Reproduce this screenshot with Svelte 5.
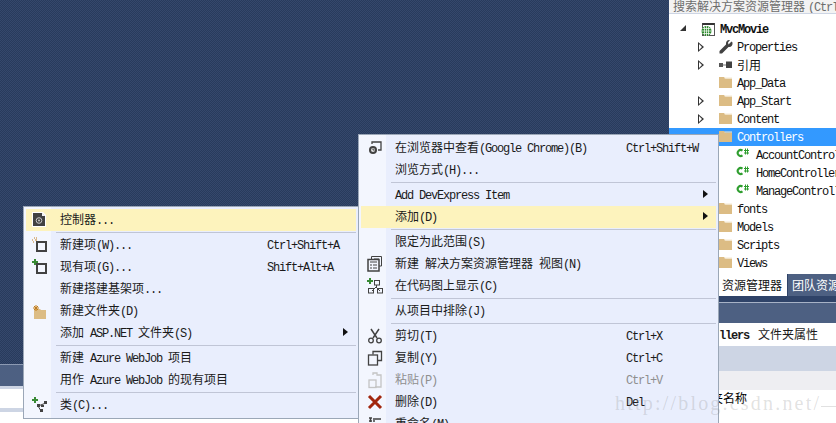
<script lang="ts">
  type Row = {
    label?: string;
    key?: string;
    icon?: string;
    sub?: boolean;
    hot?: boolean;
    off?: boolean;
    sep?: boolean;
  };

  const addMenu: Row[] = [
    { label: '控制器...', icon: 'doc', hot: true },
    { sep: true },
    { label: '新建项(W)...', key: 'Ctrl+Shift+A', icon: 'newitem' },
    { label: '现有项(G)...', key: 'Shift+Alt+A', icon: 'existing' },
    { label: '新建搭建基架项...' },
    { label: '新建文件夹(D)', icon: 'newfolder' },
    { label: '添加 ASP.NET 文件夹(S)', sub: true },
    { sep: true },
    { label: '新建 Azure WebJob 项目' },
    { label: '用作 Azure WebJob 的现有项目' },
    { sep: true },
    { label: '类(C)...', icon: 'cls' }
  ];

  const contextMenu: Row[] = [
    { label: '在浏览器中查看(Google Chrome)(B)', key: 'Ctrl+Shift+W', icon: 'browse' },
    { label: '浏览方式(H)...' },
    { sep: true },
    { label: 'Add DevExpress Item', sub: true },
    { label: '添加(D)', sub: true, hot: true },
    { sep: true },
    { label: '限定为此范围(S)' },
    { label: '新建 解决方案资源管理器 视图(N)', icon: 'view' },
    { label: '在代码图上显示(C)', icon: 'map' },
    { sep: true },
    { label: '从项目中排除(J)' },
    { sep: true },
    { label: '剪切(T)', key: 'Ctrl+X', icon: 'cut' },
    { label: '复制(Y)', key: 'Ctrl+C', icon: 'copy' },
    { label: '粘贴(P)', key: 'Ctrl+V', icon: 'paste', off: true },
    { label: '删除(D)', key: 'Del', icon: 'del' },
    { label: '重命名(M)', icon: 'rename' }
  ];

  const tree = [
    { label: 'MvcMovie', level: 'root', icon: 'web', arrow: 'open' },
    { label: 'Properties', level: 'one', icon: 'wrench', arrow: 'closed' },
    { label: '引用', level: 'one', icon: 'ref', arrow: 'closed' },
    { label: 'App_Data', level: 'one', icon: 'folder' },
    { label: 'App_Start', level: 'one', icon: 'folder', arrow: 'closed' },
    { label: 'Content', level: 'one', icon: 'folder', arrow: 'closed' },
    { label: 'Controllers', level: 'one', icon: 'folder', selected: true },
    { label: 'AccountControl', level: 'two', icon: 'cs' },
    { label: 'HomeController', level: 'two', icon: 'cs' },
    { label: 'ManageControll', level: 'two', icon: 'cs' },
    { label: 'fonts', level: 'one', icon: 'folder' },
    { label: 'Models', level: 'one', icon: 'folder' },
    { label: 'Scripts', level: 'one', icon: 'folder' },
    { label: 'Views', level: 'one', icon: 'folder' }
  ];

  function parts(text: string) {
    return (text.match(/[\u4e00-\u9fff]+|[^\u4e00-\u9fff]+/g) ?? []).map((t) => ({
      t,
      cjk: /[\u4e00-\u9fff]/.test(t)
    }));
  }
</script>

{#snippet text(value: string)}
  {#each parts(value) as part}<span class={part.cjk ? 'cjk' : 'lat'}>{part.t}</span>{/each}
{/snippet}

{#snippet folder()}
  <svg class="ico" viewBox="0 0 16 16">
    <path d="M1 2h5l1.500 1.500H14V13H1Z" fill="#dcbc84" />
    <path d="M6.500 3h7.500" stroke="#f4e8d0" fill="none" />
  </svg>
{/snippet}

{#snippet glyph(name: string)}
  <svg class="ico" viewBox="0 0 16 16">
    {#if name === 'doc'}
      <path d="M0 0h11l3 3v12H0Z" fill="#fff" />
      <path d="M1 1h9l3 3v10H1Z" fill="#424242" />
      <path d="M10 .500 13.500 4H10Z" fill="#f4f4f4" />
      <circle cx="7" cy="8.500" r="2.800" fill="none" stroke="#c8c8c8" />
      <circle cx="7" cy="8.500" r="1" fill="#c8c8c8" />
    {:else if name === 'newitem'}
      <rect x="5" y="5" width="9" height="9" fill="#f3f6fe" stroke="#424242" stroke-width="2" />
      <path d="M2 1h1M4 1h1M0 3h1M3 3h2M1 5h1" stroke="#c27d1a" fill="none" />
    {:else if name === 'existing'}
      <rect x="5" y="5" width="9" height="9" fill="#f3f6fe" stroke="#424242" stroke-width="2" />
      <path d="M3 0v6M0 3h6" stroke="#388a34" stroke-width="2" fill="none" />
    {:else if name === 'newfolder'}
      <path d="M2 6h6l1 1h5v9H2Z" fill="#dcbc84" />
      <path d="M4 2v6M1 5h6M2 3l4 4M6 3l-4 4" stroke="#c27d1a" fill="none" />
    {:else if name === 'cls'}
      <path d="M3 0v6M0 3h6" stroke="#388a34" stroke-width="2" fill="none" />
      <path d="M6 9l8-3M6 9l3 5" stroke="#424242" fill="none" />
      <path d="M5 7h3v3H5ZM12 4h3v3h-3ZM8 12h3v3H8ZM9 8h3v2H9Z" fill="#424242" />
    {:else if name === 'browse'}
      <path d="M5 4V2h9v8h-3" fill="none" stroke="#424242" stroke-width="1.300" />
      <circle cx="6" cy="10" r="4" fill="#424242" />
      <circle cx="6" cy="10" r="2" fill="#e0e0e0" />
      <path d="M6 8.500V10h1.500" stroke="#424242" fill="none" />
    {:else if name === 'view'}
      <path d="M4.500 3V.500h10V10H12M7 3h5" fill="none" stroke="#424242" />
      <rect x="1" y="3.500" width="11" height="11.500" fill="#f3f6fe" stroke="#424242" stroke-width="1.500" />
      <path d="M3 6h7M3 9h2M6 9h4M3 12h2M6 12h4" stroke="#424242" fill="none" />
    {:else if name === 'map'}
      <path d="M3 0v6M0 3h6" stroke="#388a34" stroke-width="2" fill="none" />
      <path d="M9.500 7v2M5 13l4-4 4 4" stroke="#424242" fill="none" />
      <rect x="7.500" y="2.500" width="5" height="4.500" fill="none" stroke="#424242" />
      <rect x="1.500" y="10.500" width="5" height="4.500" fill="none" stroke="#424242" />
      <rect x="10.500" y="10.500" width="5" height="4.500" fill="none" stroke="#424242" />
    {:else if name === 'cut'}
      <path d="M4 1l6 9M12 1L6 10" stroke="#424242" stroke-width="1.500" fill="none" />
      <circle cx="4" cy="12.500" r="2.300" fill="none" stroke="#424242" stroke-width="1.300" />
      <circle cx="12" cy="12.500" r="2.300" fill="none" stroke="#424242" stroke-width="1.300" />
    {:else if name === 'copy'}
      <path d="M6 4.500V1.500h8.500v9H11" fill="none" stroke="#424242" stroke-width="1.300" />
      <rect x="1.500" y="5" width="9" height="10" fill="#f3f6fe" stroke="#424242" stroke-width="1.300" />
    {:else if name === 'paste'}
      <path d="M6 3V1h4v2h4v12H8" fill="none" stroke="#c4c4c4" stroke-width="1.300" />
      <rect x="2" y="8" width="7" height="7.500" fill="none" stroke="#c4c4c4" stroke-width="1.300" />
    {:else if name === 'del'}
      <path d="M2 2l12 12M14 2L2 14" stroke="#a1260d" stroke-width="3" fill="none" />
    {:else if name === 'rename'}
      <path d="M2 2h3M2 5h3M8 3h6M7 2v4M3.500 2v4" stroke="#424242" fill="none" stroke-width="1.500" />
    {:else if name === 'web'}
      <rect x="2.500" y="2.500" width="12" height="12" fill="#fff" stroke="#555" />
      <path d="M2.500 3h12" stroke="#333" stroke-width="2" />
      <circle cx="6.500" cy="10" r="5" fill="#2c8a2c" />
      <path d="M1.500 10h10M6.500 5v10M2.500 7.500h8M2.500 12.500h8M4.500 5.500v9M8.500 5.500v9" stroke="#fff" stroke-width=".7" fill="none" />
    {:else if name === 'wrench'}
      <path d="M13.500 2.500 10.500 5.500 10 3.500 12 1C9.500.500 7.500 2.500 8 5.500L1.500 12v2.500H4L10.500 8C13 8.500 15 6.500 14.500 3.500Z" fill="#424242" />
    {:else if name === 'ref'}
      <rect x="1" y="6" width="4" height="4" fill="#555" />
      <path d="M5 8h3" stroke="#777" />
      <rect x="8" y="4.500" width="6" height="6.500" fill="#424242" />
    {:else if name === 'cs'}
      <path d="M6.500 3.600A3 3 0 1 0 6.500 8.400" fill="none" stroke="#2f9e2f" stroke-width="2" />
      <path d="M8 3.500h5M8 6h5M9.500 1.500v6M11.500 1.500v6" stroke="#2f9e2f" fill="none" />
    {/if}
  </svg>
{/snippet}

{#snippet menu(rows: Row[], kind: string)}
  <div class="menu {kind}">
    {#each rows as row}
      {#if row.sep}
        <div class="sep"></div>
      {:else}
        <div class="row" class:hot={row.hot} class:off={row.off}>
          <span class="gut">{#if row.icon}{@render glyph(row.icon)}{/if}</span>
          <span class="label">{@render text(row.label ?? '')}</span>
          <span class="key"><span class="lat">{row.key ?? ''}</span></span>
          {#if row.sub}<span class="more"></span>{/if}
        </div>
      {/if}
    {/each}
  </div>
{/snippet}

<div class="stage">
  <main class="editor">
    <div class="canvas"></div>
    <div class="out-tabs"></div>
    <div class="out-edge"></div>
    <div class="out-box"></div>
    <div class="out-bar"></div>
    <div class="out-rest"></div>
  </main>

  <aside class="explorer">
    <div class="search">{@render text('搜索解决方案资源管理器')}<span class="lat hint">(Ctrl</span></div>
    <div class="tree">
      {#each tree as node}
        <div class="node {node.level}" class:selected={node.selected}>
          <span class="twist">
            {#if node.arrow === 'open'}<i class="open"></i>{:else if node.arrow === 'closed'}<i class="closed"></i>{/if}
          </span>
          {#if node.icon === 'folder'}{@render folder()}{:else}{@render glyph(node.icon)}{/if}
          <span class="name">{@render text(node.label)}</span>
        </div>
      {/each}
    </div>
    <div class="tabs">
      <span class="tab active">{@render text('资源管理器')}</span>
      <span class="tab">{@render text('团队资源')}</span>
    </div>
    <div class="strip"></div>
    <div class="title"></div>
    <div class="prop-name"><b class="lat">llers</b>{@render text(' 文件夹属性')}</div>
    <div class="prop-tools">
      <i></i>
      <svg class="ico" viewBox="0 0 16 16">
        <path d="M13.500 2.500 10.500 5.500 10 3.500 12 1C9.500.500 7.500 2.500 8 5.500L1.500 12v2.500H4L10.500 8C13 8.500 15 6.500 14.500 3.500Z" fill="#999" />
      </svg>
    </div>
    <div class="prop-group"></div>
    <div class="prop-row">{@render text('夹名称')}</div>
  </aside>

  {@render menu(contextMenu, 'context')}
  {@render menu(addMenu, 'add')}

  <div class="mark">http://blog.csdn.net/</div>
</div>

<style>
  :global(body) {
    margin: 0;
    background: #fff;
  }

  .stage {
    position: relative;
    display: flex;
    width: 836px;
    height: 423px;
    overflow: hidden;
    color: #1a1a1a;
    font-size: 12px;
    line-height: 18px;
    white-space: pre;
  }

  .cjk {
    font-family: 'Noto Sans CJK SC', sans-serif;
    font-size: 12px;
  }

  .lat {
    font-family: 'Liberation Mono', monospace;
    font-size: 12px;
    letter-spacing: -1.200px;
  }

  .ico {
    display: block;
    width: 16px;
    height: 16px;
    flex: none;
    overflow: visible;
  }

  /* editor side */
  .editor {
    display: flex;
    flex-direction: column;
    flex: 1;
    background: #fff;
  }

  .canvas {
    flex: 1;
    background: repeating-conic-gradient(#283b5c 0 25%, #35486c 0 50%) 0 0 / 2px 2px;
  }

  .out-tabs {
    height: 21px;
    border-top: 1px solid #8c9ab3;
    background: #4d6082;
  }

  .out-edge {
    height: 3px;
    background: #cdd5e4;
  }

  .out-box {
    height: 19px;
    background: #fff;
  }

  .out-bar {
    height: 4px;
    background: #cdd5e4;
  }

  .out-rest {
    height: 11px;
    background: #fff;
  }

  /* solution explorer */
  .explorer {
    display: flex;
    flex-direction: column;
    width: 167px;
    border-left: 1px solid #2f4368;
    background: #fff;
  }

  .search {
    height: 13px;
    padding-left: 4px;
    border-bottom: 1px solid #cdd5e4;
    background: #f3f3f3;
    color: #6d6d6d;
    line-height: 12px;
    overflow: hidden;
  }

  .hint {
    margin-left: 3px;
  }

  .tree {
    display: flex;
    flex-direction: column;
    height: 260px;
    padding-top: 6px;
    box-sizing: border-box;
  }

  .node {
    display: flex;
    align-items: center;
    height: 18px;
    flex: none;
    color: #111;
  }

  .node .name {
    margin-left: 3px;
  }

  .node.root {
    padding-left: 9px;
  }

  .node.root .name {
    font-weight: bold;
    margin-left: 4px;
  }

  .node.one {
    padding-left: 27px;
  }

  .node.two {
    padding-left: 45px;
  }

  .node.two .name {
    margin-left: 4px;
  }

  .node.selected {
    background: #3399ff;
    color: #fff;
  }

  .twist {
    display: block;
    width: 22px;
    height: 18px;
    position: relative;
    flex: none;
  }

  .twist i {
    position: absolute;
    display: block;
  }

  .twist .closed {
    left: 2px;
    top: 4px;
    width: 0;
    height: 0;
    border-left: 6px solid #333;
    border-top: 5px solid transparent;
    border-bottom: 5px solid transparent;
  }

  .twist .closed::after {
    content: '';
    position: absolute;
    left: -5px;
    top: -3px;
    border-left: 3.500px solid #fff;
    border-top: 3px solid transparent;
    border-bottom: 3px solid transparent;
  }

  .twist .open {
    left: 2px;
    top: 5px;
    width: 0;
    height: 0;
    border-bottom: 6px solid #333;
    border-left: 6px solid transparent;
  }

  .tabs {
    display: flex;
    height: 22px;
    background: #2f4368;
    flex: none;
  }

  .tab {
    display: block;
    padding: 2px 0 0 4px;
    flex: 1;
    background: #4d6082;
    color: #fff;
    margin-left: 1px;
  }

  .tab.active {
    flex: 0 0 118px;
    margin-left: 0;
    padding-left: 50px;
    box-sizing: border-box;
    background: #fff;
    color: #111;
    text-align: right;
    padding-right: 5px;
  }

  .strip {
    height: 6px;
    background: #2f4368;
    border-bottom: 1px solid #a7b2c6;
  }

  .title {
    height: 20px;
    background: #4d6082;
  }

  .prop-name {
    height: 23px;
    padding-left: 50px;
    line-height: 22px;
  }

  .prop-name b {
    margin-right: 3px;
  }

  .prop-tools {
    display: flex;
    align-items: center;
    gap: 8px;
    height: 25px;
    padding-left: 1px;
    background: #cdd5e4;
  }

  .prop-tools i {
    display: block;
    width: 1px;
    height: 19px;
    background: #7d8ba3;
  }

  .prop-group {
    height: 19px;
    background: #eeeef2;
  }

  .prop-row {
    padding-left: 42px;
    height: 18px;
    line-height: 16px;
    color: #000;
  }

  /* menus lie over everything */
  .menu {
    position: absolute;
    box-sizing: border-box;
    padding: 2px;
    border: 1px solid #9ba7b7;
    background: linear-gradient(90deg, #f3f6fe 27px, #e9eefd 27px);
  }

  .menu.add {
    left: 23px;
    top: 206px;
    width: 336px;
  }

  .menu.context {
    left: 358px;
    top: 134px;
    width: 361px;
  }

  .row {
    display: grid;
    position: relative;
    grid-template-columns: 34px 207px 1fr;
    align-items: center;
    height: 22px;
  }

  .context .row {
    grid-template-columns: 34px 231px 1fr;
  }

  .row.hot {
    background: #fdf3bd;
  }

  .row.off {
    color: #8f8f8f;
  }

  .gut {
    padding-left: 6px;
  }

  .more {
    position: absolute;
    right: 8px;
    top: 6px;
    border-left: 5px solid #111;
    border-top: 4.500px solid transparent;
    border-bottom: 4.500px solid transparent;
  }

  .sep {
    height: 1px;
    margin: 1px 0 1px 30px;
    background: #c0c5d6;
  }

  .mark {
    position: absolute;
    left: 615px;
    right: 0;
    top: 391px;
    display: flex;
    color: rgb(130 130 130 / 0.24);
    font-family: 'Liberation Serif', serif;
    font-size: 20px;
    line-height: 24px;
    letter-spacing: 2.200px;
    pointer-events: none;
  }

  .mark::after {
    content: '';
    flex: 1;
    height: 1px;
    margin-top: 15px;
    background: rgb(130 130 130 / 0.24);
  }
</style>
